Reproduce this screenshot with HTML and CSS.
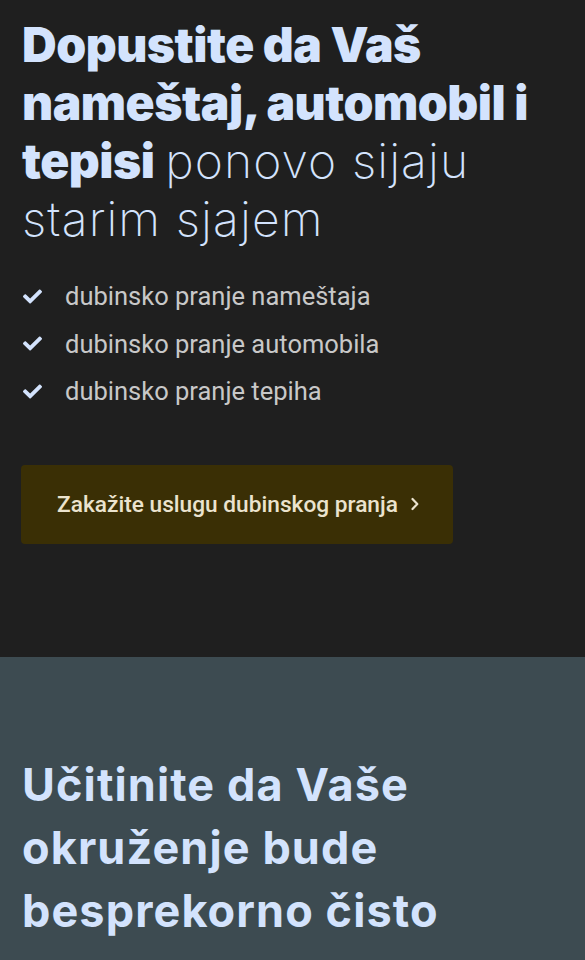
FILE: index.html
```html
<!DOCTYPE html>
<html lang="sr">
<head>
<meta charset="utf-8">
<title>Dubinsko pranje</title>
<link rel="stylesheet" href="styles.css">
</head>
<body>
<section class="hero">
  <h1 class="hero-title"><strong>Dopustite da Vaš nameštaj, automobil i</strong> <strong>tepisi</strong> <span class="light">ponovo sijaju</span> <span class="light">starim sjajem</span></h1>
  <ul class="features">
    <li class="feature">
      <svg class="check" viewBox="0 0 512 512" aria-hidden="true"><path d="M173.898 439.404l-166.4-166.4c-9.997-9.997-9.997-26.206 0-36.204l36.203-36.204c9.997-9.998 26.207-9.998 36.204 0L192 312.69 432.095 72.596c9.997-9.997 26.207-9.997 36.204 0l36.203 36.204c9.997 9.997 9.997 26.206 0 36.204l-294.4 294.401c-9.998 9.997-26.207 9.997-36.204-.001z"/></svg>
      <span>dubinsko pranje nameštaja</span>
    </li>
    <li class="feature">
      <svg class="check" viewBox="0 0 512 512" aria-hidden="true"><path d="M173.898 439.404l-166.4-166.4c-9.997-9.997-9.997-26.206 0-36.204l36.203-36.204c9.997-9.998 26.207-9.998 36.204 0L192 312.69 432.095 72.596c9.997-9.997 26.207-9.997 36.204 0l36.203 36.204c9.997 9.997 9.997 26.206 0 36.204l-294.4 294.401c-9.998 9.997-26.207 9.997-36.204-.001z"/></svg>
      <span>dubinsko pranje automobila</span>
    </li>
    <li class="feature">
      <svg class="check" viewBox="0 0 512 512" aria-hidden="true"><path d="M173.898 439.404l-166.4-166.4c-9.997-9.997-9.997-26.206 0-36.204l36.203-36.204c9.997-9.998 26.207-9.998 36.204 0L192 312.69 432.095 72.596c9.997-9.997 26.207-9.997 36.204 0l36.203 36.204c9.997 9.997 9.997 26.206 0 36.204l-294.4 294.401c-9.998 9.997-26.207 9.997-36.204-.001z"/></svg>
      <span>dubinsko pranje tepiha</span>
    </li>
  </ul>
  <a class="cta" href="#">
    <span>Zakažite uslugu dubinskog pranja</span>
    <svg class="chevron" viewBox="0 0 8 14" aria-hidden="true"><path d="M1.5 2 L6.3 7 L1.5 12" fill="none" stroke="currentColor" stroke-width="2.2" stroke-linecap="round" stroke-linejoin="round"/></svg>
  </a>
</section>
<section class="about">
  <h2 class="about-title">Učitinite da Vaše okruženje bude besprekorno čisto</h2>
</section>
</body>
</html>
```
FILE: styles.css
```css
html, body {
  margin: 0;
  padding: 0;
}
body {
  background: #3d4b51;
  font-family: Roboto, "Noto Sans", sans-serif;
}
.hero {
  background: #1f1f1f;
  padding: 15.7px 22px 113.5px;
}
.hero-title {
  margin: 0;
  font-family: Inter, "Noto Sans", sans-serif;
  font-size: 48px;
  line-height: 58.2px;
  font-weight: 700;
  color: #d3e3fd;
  letter-spacing: -0.5px;
}
.hero-title .light {
  font-weight: 250;
  letter-spacing: 1.1px;
}
.features {
  list-style: none;
  margin: 24px 0 0;
  padding: 0;
}
.feature {
  display: flex;
  align-items: center;
  height: 47.5px;
  font-size: 25.5px;
  color: #c8c8c8;
}
.check {
  width: 19px;
  height: 19px;
  fill: #d3e3fd;
  margin-left: 1px;
  margin-right: 23px;
  flex: none;
}
.cta {
  display: flex;
  align-items: center;
  gap: 13px;
  width: 432px;
  height: 79px;
  box-sizing: border-box;
  margin-top: 49.5px;
  margin-left: -1px;
  padding-left: 36px;
  background: #3a2f05;
  border-radius: 4px;
  color: #ebe3ce;
  font-size: 22.7px;
  font-weight: 500;
  text-decoration: none;
}
.chevron {
  width: 8px;
  height: 14px;
  flex: none;
}
.about {
  padding: 96px 22px 40px;
}
.about-title {
  margin: 0;
  font-family: Inter, "Noto Sans", sans-serif;
  font-size: 45px;
  line-height: 63px;
  font-weight: 700;
  color: #d3e3fd;
  letter-spacing: 1.1px;
}
```
